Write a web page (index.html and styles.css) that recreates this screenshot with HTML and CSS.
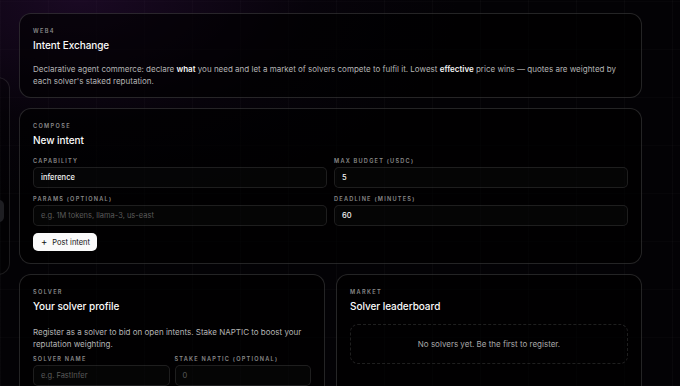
FILE: index.html
```html
<!DOCTYPE html>
<html lang="en">
<head>
<meta charset="utf-8">
<title>Intent Exchange</title>
<link rel="stylesheet" href="styles.css">
</head>
<body>
<div class="side-panel"></div>
<div class="side-pill"></div>
<main class="page">
  <section class="card card-intro">
    <div class="eyebrow">WEB4</div>
    <h1 class="title">Intent Exchange</h1>
    <p class="desc desc-intro">Declarative agent commerce: declare <b>what</b> you need and let a market of solvers compete to fulfil it. Lowest <b>effective</b> price wins — quotes are weighted by each solver's staked reputation.</p>
  </section>

  <section class="card">
    <div class="eyebrow">COMPOSE</div>
    <h2 class="title">New intent</h2>
    <div class="form-grid">
      <label class="field">
        <span class="field-label">CAPABILITY</span>
        <span class="input">inference</span>
      </label>
      <label class="field">
        <span class="field-label">MAX BUDGET (USDC)</span>
        <span class="input">5</span>
      </label>
      <label class="field">
        <span class="field-label">PARAMS (OPTIONAL)</span>
        <span class="input placeholder">e.g. 1M tokens, llama-3, us-east</span>
      </label>
      <label class="field">
        <span class="field-label">DEADLINE (MINUTES)</span>
        <span class="input">60</span>
      </label>
    </div>
    <button class="btn"><span class="plus">+</span>Post intent</button>
  </section>

  <div class="row">
    <section class="card">
      <div class="eyebrow">SOLVER</div>
      <h2 class="title">Your solver profile</h2>
      <p class="desc desc-solver">Register as a solver to bid on open intents. Stake NAPTIC to boost your reputation weighting.</p>
      <div class="form-grid tight">
        <label class="field">
          <span class="field-label">SOLVER NAME</span>
          <span class="input placeholder">e.g. FastInfer</span>
        </label>
        <label class="field">
          <span class="field-label">STAKE NAPTIC (OPTIONAL)</span>
          <span class="input placeholder">0</span>
        </label>
      </div>
    </section>
    <section class="card">
      <div class="eyebrow">MARKET</div>
      <h2 class="title">Solver leaderboard</h2>
      <div class="empty">No solvers yet. Be the first to register.</div>
    </section>
  </div>
</main>
</body>
</html>
```

FILE: styles.css
```css
* { box-sizing: border-box; }
html, body { height: 100%; }
body {
  margin: 0;
  overflow: hidden;
  font-family: Inter, "Liberation Sans", sans-serif;
  color: #f2f2f2;
  background-color: #030205;
  background-image:
    radial-gradient(ellipse 380px 200px at 80px 0px, rgba(60, 20, 80, 0.40), rgba(35, 10, 50, 0.12) 60%, rgba(0,0,0,0) 100%),
    repeating-linear-gradient(90deg, rgba(255,255,255,0.022) 0 1px, transparent 1px 48px),
    repeating-linear-gradient(0deg, rgba(255,255,255,0.015) 0 1px, transparent 1px 48px);
}
.side-panel {
  position: absolute;
  left: -200px;
  top: 77px;
  width: 210px;
  height: 198px;
  border: 1px solid rgba(255,255,255,0.10);
  border-radius: 12px;
  background: rgba(0,0,0,0.25);
}
.side-pill {
  position: absolute;
  left: -10px;
  top: 200px;
  width: 14px;
  height: 22px;
  border-radius: 5px;
  background: #1e1e22;
}
.page {
  position: relative;
  padding: 13px 0 0 19px;
  width: 642px;
  display: flex;
  flex-direction: column;
  gap: 10px;
}
.card {
  border: 1px solid rgba(255,255,255,0.14);
  border-radius: 12px;
  background: rgba(0,0,0,0.62);
  padding: 12px 13px;
}
.card-intro { padding-bottom: 10px; }
.eyebrow {
  font-size: 5.6px;
  line-height: 10px;
  letter-spacing: 0.24em;
  color: #8a8a8a;
  font-weight: 600;
}
.title {
  margin: 1px 0 0;
  font-size: 10px;
  line-height: 16px;
  font-weight: 500;
  color: #fafafa;
  letter-spacing: -0.005em;
}
.desc {
  margin: 8px 0 0;
  font-size: 8px;
  line-height: 12px;
  color: #b4b4b4;
}
.desc b { color: #f4f4f4; font-weight: 600; }
.desc-intro { margin-top: 10px; }
.desc-solver { margin-top: 12px; }
.form-grid {
  margin-top: 8px;
  display: grid;
  grid-template-columns: 1fr 1fr;
  column-gap: 7px;
  row-gap: 6px;
}
.form-grid.tight { margin-top: 4px; column-gap: 5px; }
.field { display: flex; flex-direction: column; gap: 1px; }
.field-label {
  font-size: 5.6px;
  line-height: 10px;
  letter-spacing: 0.22em;
  color: #8a8a8a;
  font-weight: 600;
}
.input {
  height: 21px;
  border: 1px solid rgba(255,255,255,0.10);
  border-radius: 5px;
  background: rgba(255,255,255,0.02);
  padding: 0 7px;
  display: flex;
  align-items: center;
  font-size: 7.5px;
  color: #f4f4f4;
  font-weight: 500;
}
.input.placeholder { color: #5a5a5a; font-weight: 400; }
.btn {
  margin-top: 7px;
  height: 18px;
  padding: 0 7px 0 8px;
  border: 0;
  border-radius: 5px;
  background: #fafafa;
  color: #111;
  font-family: inherit;
  font-size: 7.5px;
  display: inline-flex;
  align-items: center;
  gap: 5px;
  cursor: pointer;
}
.plus { font-size: 9.5px; line-height: 1; }
.row {
  display: grid;
  grid-template-columns: 1fr 1fr;
  gap: 11px;
}
.empty {
  margin-top: 10px;
  height: 40px;
  border: 1px dashed rgba(255,255,255,0.12);
  border-radius: 8px;
  display: flex;
  align-items: center;
  justify-content: center;
  font-size: 8px;
  color: #a8a8a8;
}
```
